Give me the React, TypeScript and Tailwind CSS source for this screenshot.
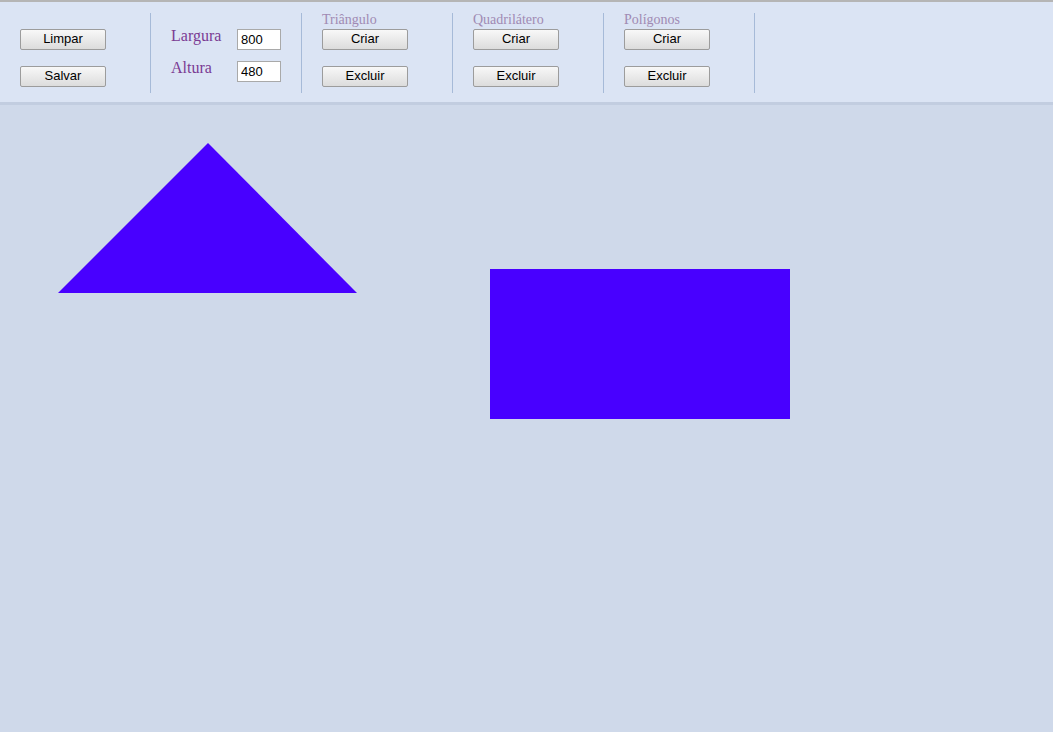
const Btn = ({ label, className = "" }: { label: string; className?: string }) => (
	<button
		className={
			"block w-[86px] h-[21px] shrink-0 rounded-[2px] border border-[#9c9c9c] bg-gradient-to-b from-[#f8f8f8] to-[#dcdcdc] pb-[2px] text-[13px] leading-[17px] text-black font-['Liberation_Sans',Arial,sans-serif] " +
			className
		}
	>
		{label}
	</button>
);

const ShapeGroup = ({ title }: { title: string }) => (
	<div className="w-[151px] h-[80px] border-r border-[#a6bad8] pl-5 flex flex-col">
		<div className="mt-[-1px] h-4 leading-4 text-[14px] text-[#a08ab3] font-['Liberation_Serif',serif]">{title}</div>
		<Btn label="Criar" className="mt-[1px]" />
		<Btn label="Excluir" className="mt-4" />
	</div>
);

export default function App() {
	return (
		<div className="w-[1053px] h-[732px] overflow-hidden bg-[#cfd9ea] font-['Liberation_Sans',Arial,sans-serif]">
			<div className="border-t-2 border-[#b5b5b5] border-b-[3px] border-b-[#c2cde0] bg-[#dbe4f4] pt-[11px] pb-[9px] flex">
				<div className="w-[151px] h-[80px] border-r border-[#a6bad8] pl-5 pt-4 flex flex-col gap-4">
					<Btn label="Limpar" />
					<Btn label="Salvar" />
				</div>

				<div className="w-[151px] h-[80px] border-r border-[#a6bad8] pl-5 pt-4 grid grid-cols-[66px_44px] grid-rows-[21px_21px] gap-y-[11px]">
					<span className="-mt-[2px] leading-[18px] text-[16px] text-[#7a3b93] font-['Liberation_Serif',serif]">Largura</span>
					<input
						defaultValue="800"
						className="w-[44px] h-[21px] border border-[#a9a9a9] bg-white px-[3px] text-[13px] text-black outline-none"
					/>
					<span className="-mt-[2px] leading-[18px] text-[16px] text-[#7a3b93] font-['Liberation_Serif',serif]">Altura</span>
					<input
						defaultValue="480"
						className="w-[44px] h-[21px] border border-[#a9a9a9] bg-white px-[3px] text-[13px] text-black outline-none"
					/>
				</div>

				<ShapeGroup title="Triângulo" />
				<ShapeGroup title="Quadrilátero" />
				<ShapeGroup title="Polígonos" />
			</div>

			<svg width="1053" height="627" className="block">
				<polygon points="208,38 357,188 58,188" fill="#4800ff" />
				<rect x="490" y="164" width="300" height="150" fill="#4800ff" />
			</svg>
		</div>
	);
}
